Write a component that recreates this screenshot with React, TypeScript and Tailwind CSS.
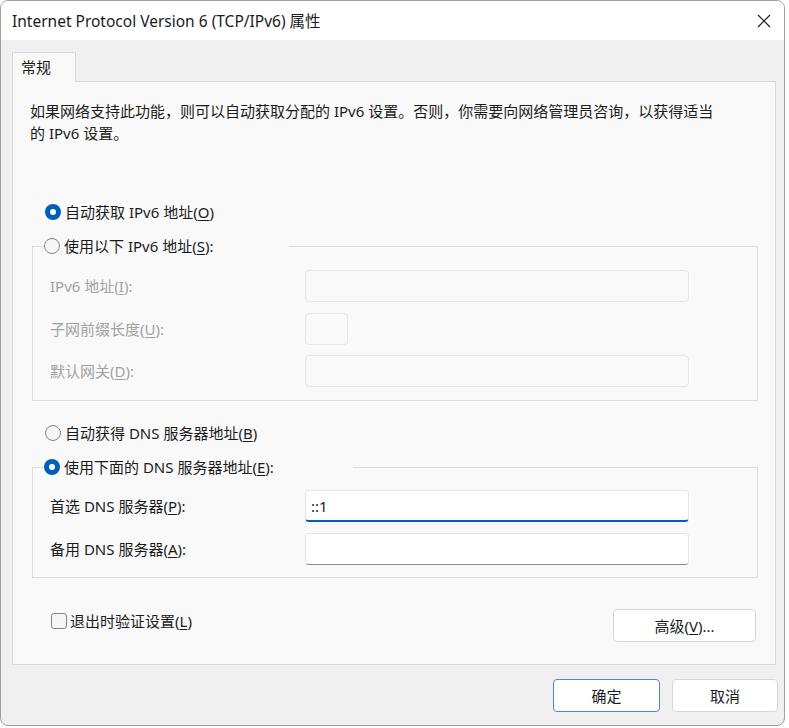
import React from 'react';

function Radio({ checked, children }: { checked: boolean; children: React.ReactNode }) {
    return (
        <div className="flex h-[22px] items-center gap-[4px]">
            {checked ? (
                <span className="flex h-[16px] w-[16px] items-center justify-center rounded-full bg-[#005fb8]">
                    <span className="h-[6px] w-[6px] rounded-full bg-white" />
                </span>
            ) : (
                <span className="h-[16px] w-[16px] rounded-full border border-[#858585] bg-[#f6f6f6]" />
            )}
            <span className="whitespace-nowrap">{children}</span>
        </div>
    );
}

function Key({ k }: { k: string }) {
    return (
        <>
            (<u className="underline-offset-[2px]">{k}</u>)
        </>
    );
}

function Field({
    label,
    k,
    width = 'w-[384px]',
    disabled,
    value,
    focused,
}: {
    label: string;
    k: string;
    width?: string;
    disabled?: boolean;
    value?: string;
    focused?: boolean;
}) {
    let box = 'h-[32px] rounded-[4px] border border-[#e6e6e6] bg-[#f9f9f9]';
    if (!disabled) {
        box = focused
            ? 'h-[32px] rounded-[4px] border border-[#e6e6e6] border-b-2 border-b-[#005fb8] bg-white pl-[5px] flex items-center'
            : 'h-[32px] rounded-[4px] border border-[#e6e6e6] border-b-[#8a8a8a] bg-white';
    }
    return (
        <div className="flex items-center">
            <div className={'w-[255px] whitespace-nowrap ' + (disabled ? 'text-[#a2a2a2]' : '')}>
                {label}
                <Key k={k} />:
            </div>
            <div className={width + ' ' + box}>{value}</div>
        </div>
    );
}

export default function App() {
    return (
        <div className="h-[728px] w-[789px] bg-white font-['Noto_Sans','Noto_Sans_CJK_SC',sans-serif] text-[15px] leading-[22px] text-[#1b1b1b]">
            <div className="flex h-[726px] w-[785px] flex-col overflow-hidden rounded-[8px] border border-[#a0a0a0] bg-[#f0f0f0]">
                <div className="flex h-[39px] shrink-0 items-center justify-between bg-white pl-[11px] pr-[12px]">
                    <span className="text-[15.5px]">Internet Protocol Version 6 (TCP/IPv6) 属性</span>
                    <svg width="14" height="14" viewBox="0 0 14 14" className="mr-[1px]">
                        <path d="M1 1 L13 13 M13 1 L1 13" stroke="#1b1b1b" strokeWidth="1.2" fill="none" />
                    </svg>
                </div>

                <div className="pl-[11px] pr-[8px] pt-[12px]">
                    <div className="relative z-10 -mb-px flex h-[30px] w-[64px] items-start border border-b-0 border-[#d9d9d9] bg-[#f9f9f9] pl-[8px] pt-[3px]">
                        常规
                    </div>
                    <div className="border border-[#d9d9d9] bg-[#f9f9f9] pl-[17px] pr-[17px] pb-[22px] pt-[18px]">
                        <p className="whitespace-nowrap">
                            如果网络支持此功能，则可以自动获取分配的 IPv6 设置。否则，你需要向网络管理员咨询，以获得适当
                            <br />
                            的 IPv6 设置。
                        </p>

                        <div className="ml-[15px] mt-[57px]">
                            <Radio checked>
                                自动获取 IPv6 地址<Key k="O" />
                            </Radio>
                        </div>

                        <fieldset className="ml-[2px] mt-[12px] w-[726px] border border-[#dedede]">
                            <legend className="ml-[11px] w-[245px]">
                                <Radio checked={false}>
                                    使用以下 IPv6 地址<Key k="S" />:
                                </Radio>
                            </legend>
                            <div className="flex flex-col pb-[13px] pl-[17px] pt-[13px]">
                                <Field label="IPv6 地址" k="I" disabled />
                                <div className="mt-[11px]">
                                    <Field label="子网前缀长度" k="U" width="w-[43px]" disabled />
                                </div>
                                <div className="mt-[10px]">
                                    <Field label="默认网关" k="D" disabled />
                                </div>
                            </div>
                        </fieldset>

                        <div className="ml-[15px] mt-[21px]">
                            <Radio checked={false}>
                                自动获得 DNS 服务器地址<Key k="B" />
                            </Radio>
                        </div>

                        <fieldset className="ml-[2px] mt-[12px] w-[726px] border border-[#dedede]">
                            <legend className="ml-[11px] w-[309px]">
                                <Radio checked>
                                    使用下面的 DNS 服务器地址<Key k="E" />:
                                </Radio>
                            </legend>
                            <div className="flex flex-col pb-[12px] pl-[17px] pt-[12px]">
                                <Field label="首选 DNS 服务器" k="P" value="::1" focused />
                                <div className="mt-[11px]">
                                    <Field label="备用 DNS 服务器" k="A" />
                                </div>
                            </div>
                        </fieldset>

                        <div className="mt-[31px] flex items-start justify-between pr-[2px]">
                            <div className="ml-[21px] mt-[1px] flex h-[22px] items-center gap-[3px]">
                                <span className="h-[16px] w-[16px] rounded-[3px] border border-[#858585] bg-[#f6f6f6]" />
                                <span>
                                    退出时验证设置<Key k="L" />
                                </span>
                            </div>
                            <button className="h-[33px] w-[143px] rounded-[4px] border border-[#d6d6d6] bg-white">
                                高级<Key k="V" />...
                            </button>
                        </div>
                    </div>

                    <div className="mt-[14px] flex justify-end gap-[12px]">
                        <button className="h-[33px] w-[107px] rounded-[4px] border border-[#4f86c6] bg-white">确定</button>
                        <button className="-mr-[2px] h-[33px] w-[106px] rounded-[4px] border border-[#d6d6d6] bg-white">取消</button>
                    </div>
                </div>
            </div>
        </div>
    );
}
